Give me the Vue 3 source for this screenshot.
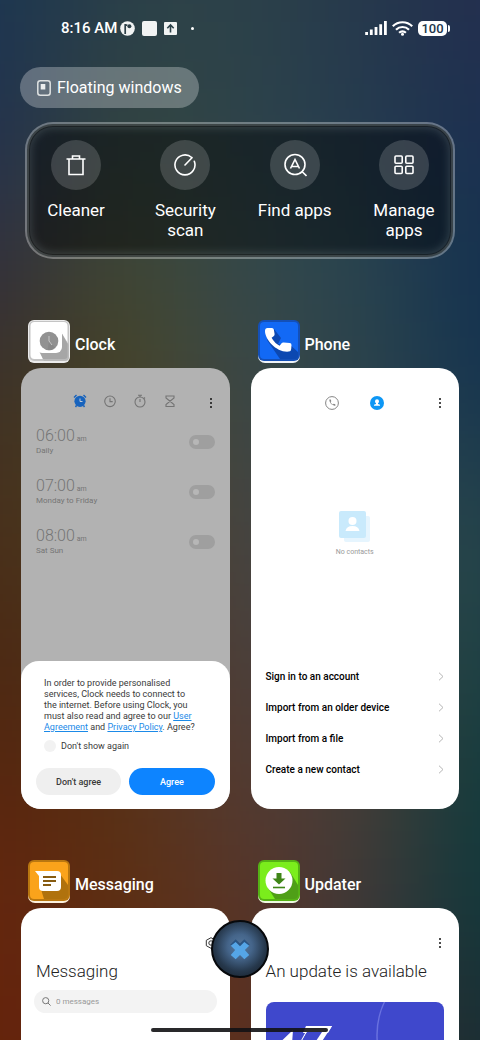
<script setup>
import { ref } from 'vue'

// Wallpaper colour mesh, top to bottom, left to right.
const mesh = [
  ['#1b3551', '#2b4048', '#2d4249', '#25394c', '#242e4f'],
  ['#22314f', '#33453f', '#2d434a', '#253b4f', '#1b2f50'],
  ['#312f3e', '#424730', '#35494b', '#29454f', '#13304f'],
  ['#3d3025', '#494523', '#3c4747', '#2d444a', '#143350'],
  ['#48301a', '#4c3f24', '#484542', '#36464a', '#23434b'],
  ['#4a2812', '#503420', '#4c403d', '#3e4442', '#1b4146'],
  ['#56250e', '#5a3013', '#533b34', '#493c35', '#0f3b3d'],
  ['#65250e', '#5c3011', '#5a3427', '#3f393a', '#0f383b'],
  ['#66220b', '#5c280e', '#62301d', '#3c3230', '#172c33'],
]
const cells = mesh.flatMap((row, r) =>
  row.map((fill, c) => ({
    fill,
    x: c === 0 ? -3 : c - 0.5,
    y: r === 0 ? -3 : r - 0.5,
    w: c === 0 ? 3.5 : c === 4 ? 3.5 : 1.02,
    h: r === 0 ? 3.5 : r === 8 ? 3.5 : 1.02,
  }))
)

const tools = [
  { id: 'clean', label: 'Cleaner' },
  { id: 'scan', label: 'Security scan' },
  { id: 'find', label: 'Find apps' },
  { id: 'manage', label: 'Manage apps' },
]

const alarms = ref([
  { time: '06:00', days: 'Daily', on: false },
  { time: '07:00', days: 'Monday to Friday', on: false },
  { time: '08:00', days: 'Sat Sun', on: false },
])

const contactActions = [
  'Sign in to an account',
  'Import from an older device',
  'Import from a file',
  'Create a new contact',
]
</script>

<template>
  <main class="screen">
    <svg class="wallpaper" viewBox="0 0 4 8" preserveAspectRatio="none" aria-hidden="true">
      <defs>
        <filter id="soft" x="-1" y="-1" width="6" height="10" filterUnits="userSpaceOnUse" color-interpolation-filters="sRGB">
          <feGaussianBlur stdDeviation="0.5" />
        </filter>
      </defs>
      <g filter="url(#soft)">
        <rect v-for="(c, i) in cells" :key="i" :x="c.x" :y="c.y" :width="c.w" :height="c.h" :fill="c.fill" />
      </g>
    </svg>

    <header class="status">
      <div class="status-side">
        <span class="clock">8:16 AM</span>
        <svg width="15" height="15" viewBox="0 0 15 15">
          <circle cx="7.5" cy="7.5" r="7.3" fill="#f1f3f3" />
          <path d="M5.2 3v10M5.2 4.2h2.2" stroke="#2d4048" stroke-width="1.7" fill="none" />
          <circle cx="9.4" cy="5.2" r="2" fill="#2d4048" />
        </svg>
        <svg width="15" height="15" viewBox="0 0 15 15"><rect width="15" height="15" rx="2" fill="#f1f3f3" /></svg>
        <svg width="13" height="13" viewBox="0 0 13 13">
          <rect width="13" height="13" rx="1" fill="#f1f3f3" />
          <path d="M6.5 10.5V3.2M3.3 6.2l3.2-3.2 3.2 3.2" stroke="#2c4148" stroke-width="1.6" fill="none" />
        </svg>
        <span class="dot"></span>
      </div>
      <div class="status-side right">
        <svg width="22" height="14" viewBox="0 0 22 14" stroke="#fff" stroke-width="2.8">
          <path d="M1.6 14v-3M6.3 14V8.6M11 14V6M15.7 14V3.3M20.4 14V0" />
        </svg>
        <svg width="21" height="15" viewBox="0 0 21 15" fill="none" stroke="#fff" stroke-width="2.2">
          <path d="M.8 5.3a13.6 13.6 0 0 1 19.400 0M4 8.700a9.200 9.200 0 0 1 13 0M7.100 11.800a5 5 0 0 1 6.800 0" />
          <circle cx="10.5" cy="13.3" r="1.5" fill="#fff" stroke="none" />
        </svg>
        <span class="battery">100</span>
      </div>
    </header>

    <button class="floating" type="button">
      <svg width="14" height="16" viewBox="0 0 14 16">
        <rect x=".8" y=".8" width="12.4" height="14.4" rx="2.5" fill="none" stroke="#dfe2e2" stroke-width="1.5" />
        <rect x="3.7" y="4" width="4.6" height="5.5" fill="#eceeee" />
      </svg>
      Floating windows
    </button>

    <nav class="tools">
      <button v-for="t in tools" :key="t.id" class="tool" type="button">
        <span class="tool-icon">
          <svg width="24" height="24" viewBox="0 0 24 24" fill="none" stroke="#fff" stroke-width="1.6">
            <g v-if="t.id === 'clean'">
              <path d="M2.5 6h19M5 6v15.500h14V6M8.500 5.500V3h7v2.500" />
            </g>
            <g v-else-if="t.id === 'scan'" stroke-linecap="round">
              <path d="M18.7 4.5A10 10 0 1 0 21.3 8.3M12 12l7-7.3" />
            </g>
            <g v-else-if="t.id === 'find'">
              <circle cx="12" cy="11.5" r="10" />
              <path d="M19 18.500l4.500 4.500M7.500 15.500 12 6.500l4.500 9M9 13.500h6" />
            </g>
            <g v-else>
              <rect x="3" y="3" width="7.2" height="7.2" rx="1" />
              <rect x="13.8" y="3" width="7.2" height="7.2" rx="1" />
              <rect x="3" y="13.3" width="7.2" height="7.2" rx="1" />
              <rect x="13.8" y="13.3" width="7.2" height="7.2" rx="1" />
            </g>
          </svg>
        </span>
        <span>{{ t.label }}</span>
      </button>
    </nav>

    <section class="recents">
      <article class="app">
        <h2 class="app-name">
          <svg width="42" height="43" viewBox="0 0 42 43">
            <rect width="42" height="43" rx="6" fill="#ececec" />
            <rect x="1" y="1" width="40" height="40" rx="5" fill="#c4c4c4" />
            <rect x="2.500" y="2" width="37" height="37" rx="4" fill="#fff" />
            <path d="M33 12l8 13v12q0 4-4 4H16l-5-10z" fill="#b9b9b9" />
            <path d="M33 12l6.500 12v12q0 3-3 3H15l-4-9z" fill="#a6a6a6" />
            <rect x="8" y="7" width="26" height="26" rx="6" fill="#fff" />
            <circle cx="21" cy="21" r="9.3" fill="#919191" />
            <path d="M21 21l6.500 7q-3 3-8 2z" fill="#7f7f7f" opacity=".5" />
            <path d="M21 16v5l3 4" stroke="#c6c6c6" fill="none" />
          </svg>
          <span>Clock</span>
        </h2>
        <div class="window dimmed">
          <div class="bar">
            <div class="tabs clock-tabs">
              <button type="button" aria-label="Alarm">
                <svg width="14" height="14" viewBox="0 0 14 14">
                  <circle cx="7" cy="7.3" r="5.6" fill="#1763bd" />
                  <path d="M1 3.500 3.500 1M13 3.500 10.500 1M3.500 11.500l-1 1.500M10.500 11.500l1 1.500" stroke="#1763bd" stroke-width="1.4" />
                  <path d="M7 4.500v3h2.500" stroke="#c0cbd8" fill="none" />
                </svg>
              </button>
              <button type="button" aria-label="World clock">
                <svg width="14" height="14" viewBox="0 0 14 14" fill="none" stroke="#747474" stroke-width="1.1">
                  <circle cx="7" cy="7.3" r="5.3" /><path d="M7 4.300v3.300h2.700" />
                </svg>
              </button>
              <button type="button" aria-label="Stopwatch">
                <svg width="14" height="14" viewBox="0 0 14 14" fill="none" stroke="#747474" stroke-width="1.1">
                  <circle cx="7" cy="8" r="5" /><path d="M7 5v3M5 1.300h4M7 1.300V3M11 3.500l1 1" />
                </svg>
              </button>
              <button type="button" aria-label="Timer">
                <svg width="14" height="14" viewBox="0 0 14 14" fill="none" stroke="#747474" stroke-width="1.1">
                  <path d="M3 2h8v2L3 10.500v2h8v-2L3 4z" />
                </svg>
              </button>
            </div>
            <button class="more" type="button" aria-label="More options"><i></i><i></i><i></i></button>
          </div>
          <ul class="alarms">
            <li v-for="(a, i) in alarms" :key="a.time">
              <label :for="'alarm' + i">
                <span class="time">{{ a.time }} <small>am</small></span>
                <span class="days">{{ a.days }}</span>
              </label>
              <input :id="'alarm' + i" v-model="a.on" class="switch" type="checkbox" />
            </li>
          </ul>
          <div class="dialog">
            <p>
              In order to provide personalised services, Clock needs to connect to the internet. Before
              using Clock, you must also read and agree to our <a href="#agreement">User Agreement</a> and
              <a href="#privacy">Privacy Policy</a>. Agree?
            </p>
            <label class="again"><input type="checkbox" />Don't show again</label>
            <div class="choices">
              <button type="button">Don't agree</button>
              <button type="button" class="primary">Agree</button>
            </div>
          </div>
        </div>
      </article>

      <article class="app">
        <h2 class="app-name">
          <svg width="42" height="43" viewBox="0 0 42 43">
            <rect y="3" width="42" height="40" rx="7" fill="#f0f4fa" />
            <rect width="42" height="41" rx="6" fill="#1450b8" />
            <rect x="2" y="2" width="38" height="37" rx="4" fill="#1269f5" />
            <path d="M16 9l7 9-3 6 6 1 4-2 10 9v4q0 3-3 3H22L9 20z" fill="#0b3d99" opacity=".75" />
            <path
              d="M9.500 8h4.500q1.500 0 1.800 1.500l.8 4.500q.2 1.500-1 2.300l-2 1.400q3 5.500 8 8l1.800-2.300q.9-1 2.300-.8l6 .3q1.800.1 1.800 2l-.3 4q-.2 2.500-2.200 2.700C19 33 7 20 7 11q0-3 2.500-3z"
              fill="#fff"
            />
          </svg>
          <span>Phone</span>
        </h2>
        <div class="window">
          <div class="bar">
            <div class="tabs phone-tabs">
              <button type="button" aria-label="Calls">
                <svg width="14" height="14" viewBox="0 0 14 14">
                  <circle cx="7" cy="7" r="6.4" fill="none" stroke="#858585" />
                  <path d="M4.300 3.600c0 3 2.500 6 6 6.300V8.200l-1.600-.5-.8.700C6.800 7.900 6 7 5.600 6l.7-.8-.5-1.600z" fill="#858585" />
                </svg>
              </button>
              <button type="button" aria-label="Contacts">
                <svg width="14" height="14" viewBox="0 0 14 14">
                  <circle cx="7" cy="7" r="7" fill="#0d97f5" />
                  <path d="M5 5.200a2 2 0 1 1 4 0q0 1.300-1 2v.8l2 .8v1H4v-1l2-.8v-.8q-1-.7-1-2z" fill="#fff" />
                </svg>
              </button>
            </div>
            <button class="more" type="button" aria-label="More options"><i></i><i></i><i></i></button>
          </div>
          <div class="empty">
            <svg width="32" height="32" viewBox="0 0 32 32">
              <rect x="5" y="5" width="26" height="26" rx="2" fill="#e6f5fe" />
              <rect width="27" height="27" rx="2" fill="#c9eafc" />
              <circle cx="13.5" cy="10" r="4" fill="#fff" />
              <path d="M6.500 20q1-5 7-5t7 5z" fill="#fff" />
            </svg>
            <span>No contacts</span>
          </div>
          <div class="links">
            <button v-for="c in contactActions" :key="c" type="button">
              {{ c }}
              <svg width="6" height="9" viewBox="0 0 6 9" fill="none" stroke="#b5b5b5"><path d="M1 .7 5 4.500 1 8.300" /></svg>
            </button>
          </div>
        </div>
      </article>

      <article class="app">
        <h2 class="app-name">
          <svg width="42" height="43" viewBox="0 0 42 43">
            <rect y="3" width="42" height="40" rx="7" fill="#fdf1dd" />
            <rect width="42" height="41" rx="6" fill="#b97710" />
            <rect x="2" y="2" width="38" height="37" rx="4" fill="#faa31b" />
            <path d="M32 14l8 11v11q0 3-3 3H16L12 26z" fill="#b0720d" />
            <path d="M7 11h22q4 0 4 4v12q0 4-4 4H15q-4 0-4-4V16z" fill="#fff" />
            <path d="M15 17h13M15 21h13M15 25h8" stroke="#875c12" stroke-width="2" />
          </svg>
          <span>Messaging</span>
        </h2>
        <div class="window">
          <div class="bar">
            <button class="gear" type="button" aria-label="Settings">
              <svg width="12" height="12" viewBox="0 0 12 12" fill="none" stroke="#333">
                <path d="M6 .7 10.700 3.300v5.400L6 11.300 1.300 8.700V3.300z" /><circle cx="6" cy="6" r="2.2" />
              </svg>
            </button>
          </div>
          <h3>Messaging</h3>
          <label class="search">
            <svg width="9" height="9" viewBox="0 0 9 9" fill="none" stroke="#777"><circle cx="3.7" cy="3.7" r="3.1" /><path d="M6 6l2.600 2.600" /></svg>
            <input type="text" placeholder="0 messages" aria-label="Search messages" />
          </label>
        </div>
      </article>

      <article class="app">
        <h2 class="app-name">
          <svg width="42" height="43" viewBox="0 0 42 43">
            <rect y="3" width="42" height="40" rx="7" fill="#eefbe0" />
            <rect width="42" height="41" rx="6" fill="#55b215" />
            <rect x="2" y="2" width="38" height="37" rx="4" fill="#7bed1c" />
            <path d="M32 12l8 13v11q0 3-3 3H17L10 28z" fill="#4f9f17" />
            <circle cx="21" cy="20.5" r="13.5" fill="#fff" />
            <path d="M18.500 13h5v5.500h4L21 24.500l-6.500-6h4z" fill="#3f8617" />
            <path d="M15 27.500h12" stroke="#3f8617" stroke-width="1.6" />
          </svg>
          <span>Updater</span>
        </h2>
        <div class="window">
          <div class="bar">
            <button class="more" type="button" aria-label="More options"><i></i><i></i><i></i></button>
          </div>
          <h3>An update is available</h3>
          <div class="banner">
            <svg width="177" height="120" viewBox="0 0 177 120" fill="none">
              <circle cx="187" cy="33" r="76" stroke="#6971df" stroke-width="1.5" />
              <path d="M5 49 27 28l-1 14h7l10-18h23L36 70l16-42H42L25 60z" fill="#fff" />
              <path d="M40 24h26l-4 7H37z" fill="#fff" />
              <path d="M41 30h15l-8 12H34z" fill="#3f48cc" />
            </svg>
          </div>
        </div>
      </article>
    </section>

    <button class="close-all" type="button" aria-label="Close all">
      <svg width="26" height="26" viewBox="0 0 24 24">
        <path d="M3 8 8 3l4 4 4-4 5 5-4 3.500-5-1-5 1z" fill="#2a5482" />
        <path d="M3.500 9 8 5.500l4 4 4-4L20.500 9l-4 4 4 4.500-4.500 4-4-4-4 4-4.500-4 4-4.500z" fill="#55a5e6" />
      </svg>
    </button>
    <div class="home-bar"></div>
  </main>
</template>

<style>
body {
  background: #2d4249;
}
</style>

<style scoped>
.screen {
  position: relative;
  height: 100vh;
  overflow: hidden;
  box-sizing: border-box;
  padding: 16px 21px 0;
  font-family: Roboto, "Liberation Sans", sans-serif;
  color: #fff;
}
.screen *,
.screen *::before {
  box-sizing: border-box;
}
.wallpaper {
  position: absolute;
  inset: 0;
  width: 100%;
  height: 100%;
  z-index: -1;
}
svg {
  display: block;
  flex: none;
}
button {
  font: inherit;
  color: inherit;
  background: none;
  border: 0;
  padding: 0;
  cursor: pointer;
}
h2,
h3,
p,
ul {
  margin: 0;
  padding: 0;
}

.status {
  display: flex;
  justify-content: space-between;
  height: 24px;
  padding: 0 9px 0 40px;
}
.status-side {
  display: flex;
  align-items: center;
  gap: 7px;
}
.status-side.right {
  gap: 5px;
}
.clock {
  font-size: 15px;
  font-weight: 500;
  margin-right: -4px;
}
.dot {
  width: 3px;
  height: 3px;
  margin-left: 7px;
  border-radius: 50%;
  background: #fff;
}
.battery {
  position: relative;
  width: 29px;
  height: 15px;
  margin-right: 3px;
  border-radius: 5px;
  background: #fff;
  color: #22364c;
  font-size: 13px;
  font-weight: 500;
  line-height: 15px;
  text-align: center;
}
.battery::before {
  content: "";
  position: absolute;
  left: 30px;
  top: 4px;
  width: 2px;
  height: 7px;
  border-radius: 0 2px 2px 0;
  background: #fff;
}

.floating {
  display: flex;
  align-items: center;
  gap: 6px;
  height: 41px;
  margin: 27px 0 0 -1px;
  padding: 0 17px;
  border-radius: 21px;
  background: rgba(255, 255, 255, 0.28);
  font-size: 16px;
}

.tools {
  display: flex;
  justify-content: space-between;
  margin: 14px 4px 0;
  min-height: 137px;
  padding: 16px 7px;
  border: 2px solid rgba(255, 255, 255, 0.32);
  border-radius: 28px;
  background: rgba(0, 0, 0, 0.44);
  background-clip: padding-box;
  box-shadow: inset 0 0 0 2px rgba(170, 180, 180, 0.22), inset 0 0 0 3px rgba(0, 0, 0, 0.35),
    inset 0 0 8px 4px rgba(160, 175, 175, 0.24);
}
.tool {
  display: flex;
  flex-direction: column;
  align-items: center;
  gap: 10px;
  width: 84px;
  font-size: 17px;
  line-height: 20px;
}
.tool-icon {
  display: grid;
  place-items: center;
  width: 50px;
  height: 50px;
  border-radius: 50%;
  background: rgba(255, 255, 255, 0.16);
}

.recents {
  display: grid;
  grid-template-columns: 1fr 1fr;
  gap: 51px 21px;
  margin-top: 61px;
}
.app-name {
  display: flex;
  align-items: center;
  gap: 5px;
  margin: 0 0 5px 7px;
  font-size: 16px;
  font-weight: 500;
  line-height: 20px;
}
.app-name span {
  padding-top: 6px;
}
.window {
  display: flex;
  flex-direction: column;
  min-height: 441px;
  border-radius: 20px;
  background: #fff;
  color: #000;
  overflow: hidden;
}
.dimmed {
  background: #b2b2b2;
}
.bar {
  position: relative;
  display: flex;
  align-items: center;
  justify-content: center;
  height: 20px;
  margin: 25px 15px 0;
}
.tabs {
  display: flex;
}
.clock-tabs {
  gap: 16px;
  margin: 0 0 5px;
}
.phone-tabs {
  gap: 31px;
}
.more,
.gear {
  position: absolute;
  right: 0;
  display: flex;
  flex-direction: column;
  align-items: center;
  gap: 2px;
  width: 8px;
}
.gear {
  right: -2px;
  width: 12px;
}
.more i {
  width: 2px;
  height: 2px;
  border-radius: 50%;
  background: #111;
}
.alarms {
  list-style: none;
  padding: 12px 15px 0;
}
.alarms li {
  display: flex;
  align-items: center;
  justify-content: space-between;
  height: 50px;
  padding-bottom: 16px;
}
.alarms label {
  display: flex;
  flex-direction: column;
  color: #757575;
}
.time {
  font-size: 16px;
  font-weight: 300;
  line-height: 14px;
}
.time small {
  margin-left: -2px;
  font-size: 7px;
  font-weight: 400;
}
.days {
  font-size: 8px;
  line-height: 9px;
}
.switch {
  appearance: none;
  width: 26px;
  height: 14px;
  margin: 0;
  padding: 4px;
  border-radius: 7px;
  background: #9f9f9f;
}
.switch::before {
  content: "";
  display: block;
  width: 6px;
  height: 6px;
  border-radius: 50%;
  background: #b7b7b7;
}
.dialog {
  margin-top: auto;
  padding: 17px 15px 14px;
  border-radius: 18px;
  background: #fff;
  color: #3a3a3a;
}
.dialog p {
  padding: 0 16px 0 8px;
  font-size: 9px;
  line-height: 11px;
}
.dialog a {
  color: #1b8ae8;
}
.again {
  display: flex;
  align-items: center;
  gap: 5px;
  margin: 7px 8px 16px;
  font-size: 9px;
  line-height: 12px;
}
.again input {
  appearance: none;
  width: 12px;
  height: 12px;
  margin: 0;
  border-radius: 50%;
  background: #f2f2f2;
}
.choices {
  display: grid;
  grid-template-columns: 1fr 1fr;
  gap: 8px;
}
.choices button {
  height: 27px;
  border-radius: 14px;
  background: #efefef;
  font-size: 9px;
  font-weight: 500;
}
.choices .primary {
  background: #0d84ff;
  color: #fff;
}
.empty {
  display: flex;
  flex-direction: column;
  align-items: center;
  gap: 5px;
  margin-top: 98px;
  font-size: 7px;
  line-height: 9px;
  color: #999;
}
.links {
  display: flex;
  flex-direction: column;
  margin-top: auto;
  padding: 0 15px 24px;
}
.links button {
  display: flex;
  align-items: center;
  justify-content: space-between;
  height: 31px;
  font-size: 10px;
  font-weight: 500;
}
.window h3 {
  margin: 8px 15px 0;
  font-size: 17px;
  font-weight: 300;
  line-height: 20px;
  color: #222;
}
.search {
  display: flex;
  align-items: center;
  gap: 5px;
  height: 23px;
  margin: 9px 13px 0;
  padding: 0 8px;
  border-radius: 12px;
  background: #f3f3f3;
}
.search input {
  width: 100%;
  min-width: 0;
  border: 0;
  padding: 0;
  background: none;
  font: 8px Roboto, sans-serif;
}
.search input::placeholder {
  color: #999;
}
.banner {
  display: flex;
  height: 120px;
  margin: 21px 15px 0;
  border-radius: 8px;
  background: #3f48cc;
  overflow: hidden;
}

.close-all {
  position: absolute;
  left: 50%;
  bottom: 62px;
  display: grid;
  place-items: center;
  width: 58px;
  height: 58px;
  margin-left: -29px;
  border-radius: 50%;
  border: 2px solid #07090c;
  background: radial-gradient(circle at 50% 45%, #56789d 0, #45658a 30%, #26384c 62%, #12171d 100%);
}
.home-bar {
  position: absolute;
  left: 50%;
  bottom: 8px;
  width: 177px;
  height: 4px;
  margin-left: -89px;
  border-radius: 2px;
  background: rgba(18, 18, 20, 0.9);
}
</style>
